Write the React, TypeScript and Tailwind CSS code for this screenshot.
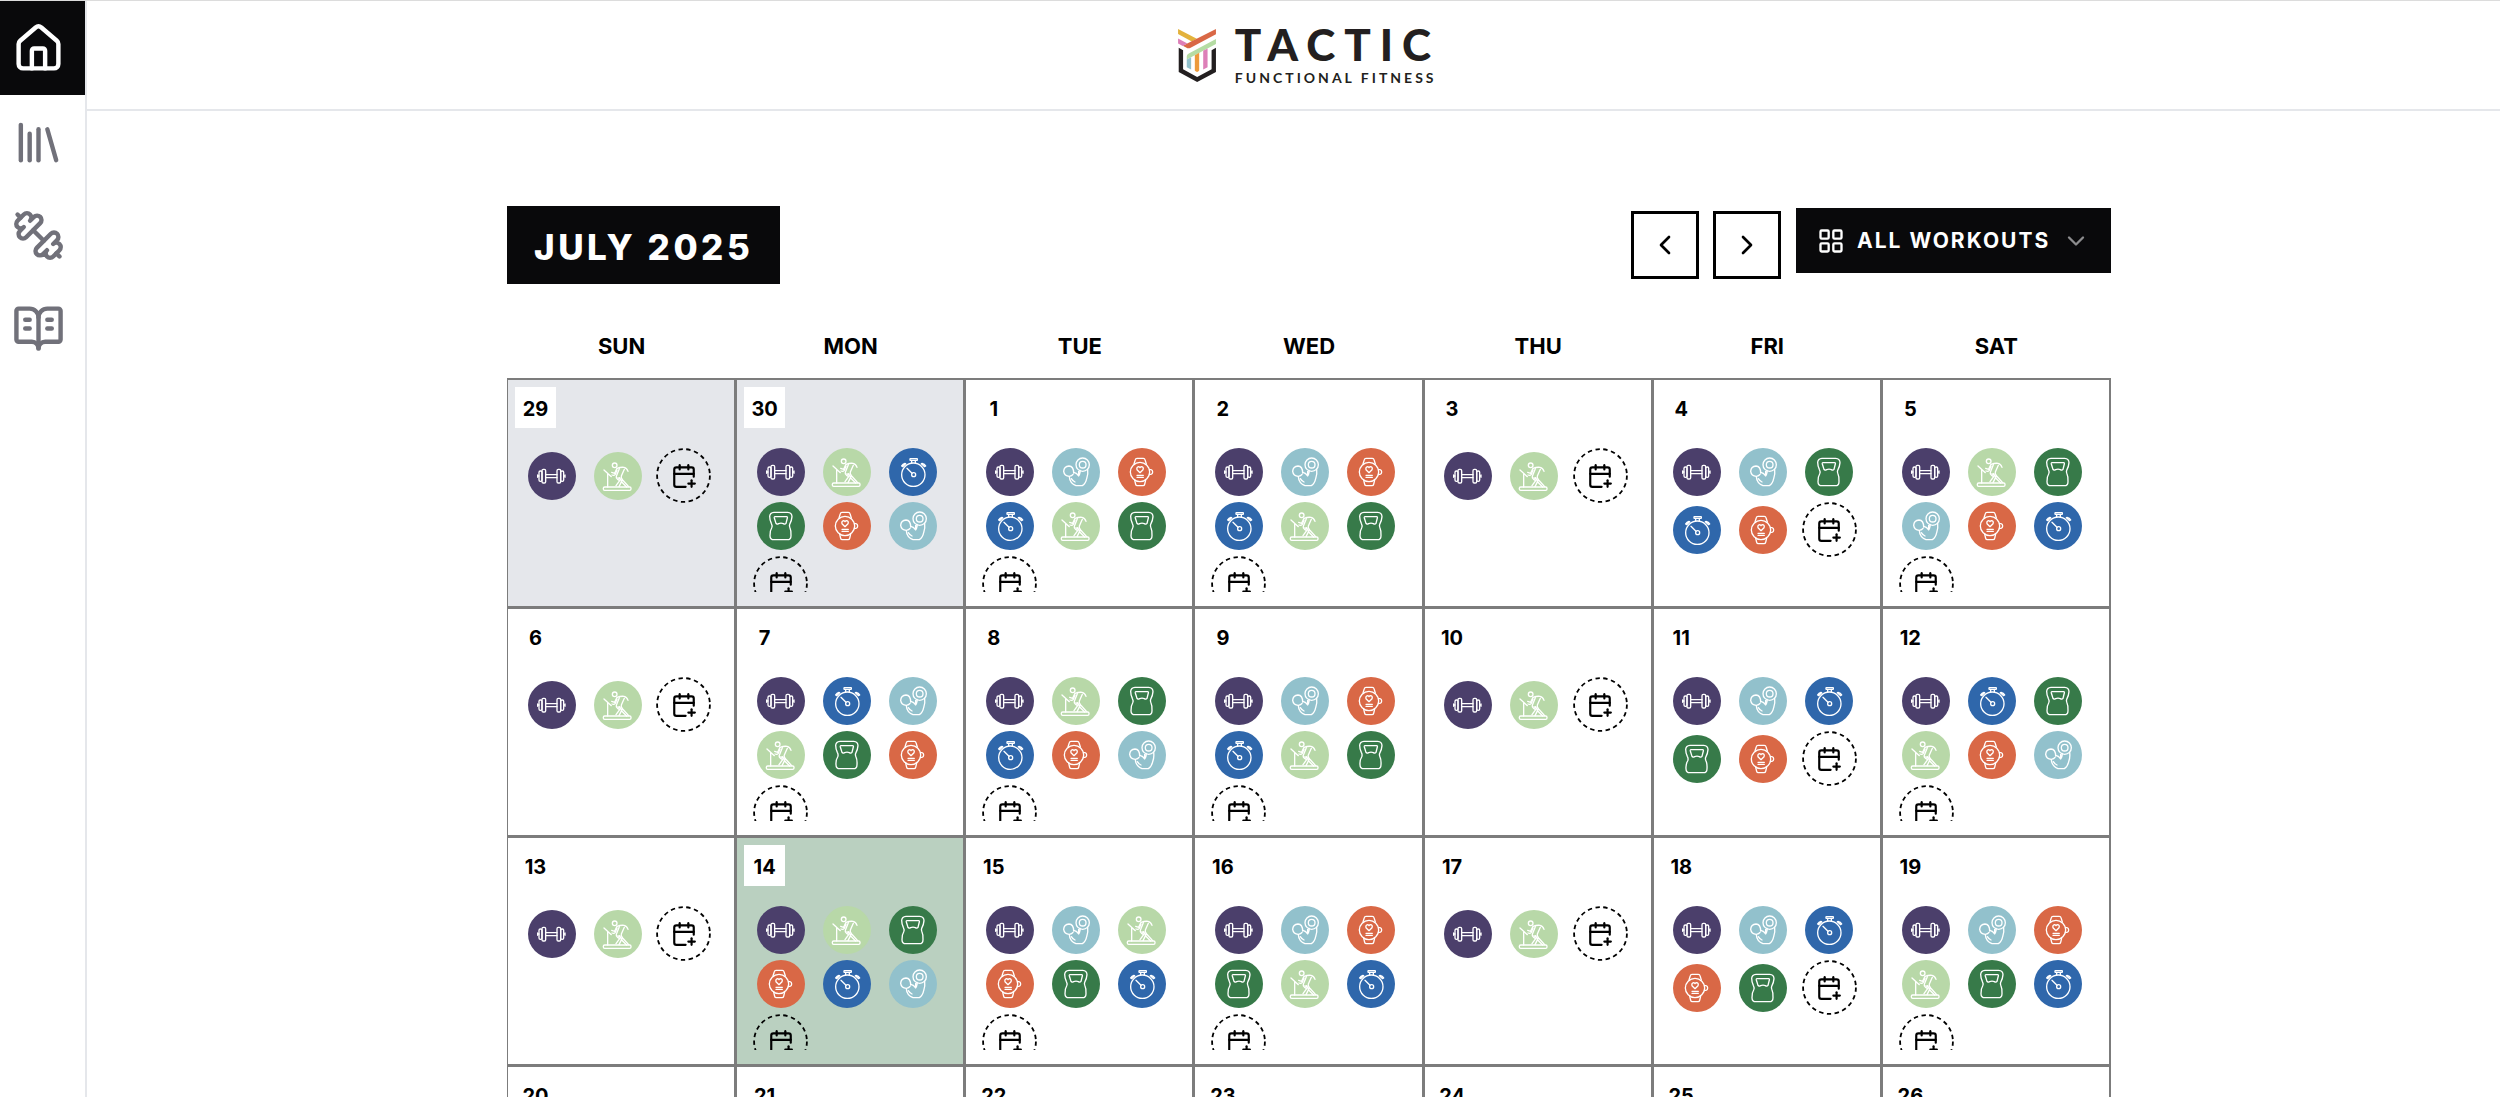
import type { ReactNode } from "react";
import {
  BookOpenText,
  CalendarPlus,
  ChevronDown,
  ChevronLeft,
  ChevronRight,
  House,
  LayoutGrid,
  Library,
} from "lucide-react";

type Kind = "strength" | "cardio" | "timer" | "kettlebell" | "watch" | "flex";

const WORKOUTS: Record<Kind, { label: string; color: string; art: ReactNode }> = {
  strength: {
    label: "Strength",
    color: "bg-[#4b3f6b]",
    art: (
      <>
        <rect x="42" y="52" width="11" height="41" rx="4" />
        <rect x="33" y="57" width="9" height="31" rx="4" />
        <rect x="87" y="52" width="11" height="41" rx="4" />
        <rect x="98" y="57" width="9" height="31" rx="4" />
        <path d="M53 68H87M53 77H87M29 69V76M111 69V76M29 72H33M107 72H111" />
      </>
    ),
  },
  cardio: {
    label: "Cardio",
    color: "bg-[#b8d8a8]",
    art: (
      <>
        <circle cx="62" cy="40" r="7" />
        <rect x="28" y="105" width="83" height="10" rx="4" />
        <path d="M41 105V66M30 54L52 74" />
        <path d="M53 61L62 64L69 49Q80 45 90 46Q99 48 102 58" />
        <path d="M69 54L64 67Q60 72 54 69M76 50L67 73Q65 78 71 82L77 86L66 101" />
        <path d="M91 52L82 72Q80 77 86 84L104 104M77 77L83 90L98 105M72 77L84 86L75 104" />
      </>
    ),
  },
  timer: {
    label: "Timed",
    color: "bg-[#2f67ab]",
    art: (
      <>
        <circle cx="73" cy="80" r="35" />
        <circle cx="74" cy="80" r="6" />
        <path d="M54 61L69 76" />
        <rect x="63" y="32" width="22" height="5" rx="1" />
        <path d="M68 37V44M79 37V44M41 56L50 47M38 54L42 49L48 46M107 56L97 47M110 54L106 49L99 46" />
      </>
    ),
  },
  kettlebell: {
    label: "Kettlebell",
    color: "bg-[#377a49]",
    art: (
      <>
        <path d="M51 31H92Q105 32 105 44Q104 57 98 67Q96 71 99 78Q103 86 102 101Q102 113 91 113H51Q39 113 39 101Q38 87 44 78Q47 71 43 64Q38 54 38 43Q39 32 51 31Z" />
        <path d="M54 44H89Q92 44 91 48L87 64Q84 68 79 65Q72 62 65 65Q59 68 57 64L52 48Q51 44 54 44Z" />
      </>
    ),
  },
  watch: {
    label: "Conditioning",
    color: "bg-[#d96846]",
    art: (
      <>
        <circle cx="66" cy="72" r="29" />
        <path d="M48 48L52 35Q53 31 57 31H76Q80 31 81 35L85 48M50 96L53 109Q54 113 58 113H75Q79 113 80 109L83 96" />
        <path d="M94 65H99Q104 66 104 72Q104 78 99 79H94" />
        <path d="M66 74L57 65Q55 57 62 56Q65 57 66 59Q68 56 71 56Q78 58 75 65Z" />
        <path d="M57 82H76M57 88H76" />
      </>
    ),
  },
  flex: {
    label: "Hypertrophy",
    color: "bg-[#92c1cc]",
    art: (
      <>
        <circle cx="92" cy="50" r="20" />
        <circle cx="92" cy="50" r="10" />
        <path d="M65 75Q65 55 51 54Q36 55 35 70Q37 84 52 85Q60 84 63 79" />
        <path d="M66 73Q75 75 80 84V70M82 81Q86 72 84 67M107 64Q109 80 104 92Q101 107 91 113H72Q53 105 52 86" />
        <path d="M58 92Q62 99 69 102" />
      </>
    ),
  },
};

const S = "strength";
const C = "cardio";
const T = "timer";
const K = "kettlebell";
const W = "watch";
const F = "flex";

type Day = { date: number; kinds: Kind[]; outside?: boolean; today?: boolean; bare?: boolean };

const WEEKS: Day[][] = [
  [
    { date: 29, kinds: [S, C], outside: true },
    { date: 30, kinds: [S, C, T, K, W, F], outside: true },
    { date: 1, kinds: [S, F, W, T, C, K] },
    { date: 2, kinds: [S, F, W, T, C, K] },
    { date: 3, kinds: [S, C] },
    { date: 4, kinds: [S, F, K, T, W] },
    { date: 5, kinds: [S, C, K, F, W, T] },
  ],
  [
    { date: 6, kinds: [S, C] },
    { date: 7, kinds: [S, T, F, C, K, W] },
    { date: 8, kinds: [S, C, K, T, W, F] },
    { date: 9, kinds: [S, F, W, T, C, K] },
    { date: 10, kinds: [S, C] },
    { date: 11, kinds: [S, F, T, K, W] },
    { date: 12, kinds: [S, T, K, C, W, F] },
  ],
  [
    { date: 13, kinds: [S, C] },
    { date: 14, kinds: [S, C, K, W, T, F], today: true },
    { date: 15, kinds: [S, F, C, W, K, T] },
    { date: 16, kinds: [S, F, W, K, C, T] },
    { date: 17, kinds: [S, C] },
    { date: 18, kinds: [S, F, T, W, K] },
    { date: 19, kinds: [S, F, W, C, K, T] },
  ],
  [20, 21, 22, 23, 24, 25, 26].map((date) => ({ date, kinds: [], bare: true })),
];

function Dumbbell() {
  return (
    <svg
      viewBox="0 0 24 24"
      className="size-[53px]"
      fill="none"
      stroke="currentColor"
      strokeWidth="2"
      strokeLinecap="round"
      strokeLinejoin="round"
      aria-hidden="true"
    >
      <path d="M14.4 14.4 9.6 9.6" />
      <path d="M18.657 21.485a2 2 0 1 1-2.829-2.828l-1.767 1.768a2 2 0 1 1-2.829-2.829l6.364-6.364a2 2 0 1 1 2.829 2.829l-1.768 1.767a2 2 0 1 1 2.828 2.829z" />
      <path d="m21.5 21.5-1.4-1.4" />
      <path d="M3.9 3.9 2.5 2.5" />
      <path d="M6.404 12.768a2 2 0 1 1-2.829-2.829l1.768-1.767a2 2 0 1 1-2.828-2.829l2.828-2.828a2 2 0 1 1 2.829 2.828l1.767-1.768a2 2 0 1 1 2.829 2.829z" />
    </svg>
  );
}

function Sidebar() {
  const links = [
    { name: "Library", icon: <Library className="size-[53px]" /> },
    { name: "Workouts", icon: <Dumbbell /> },
    { name: "Guides", icon: <BookOpenText className="size-[53px]" /> },
  ];
  return (
    <nav className="w-[87px] shrink-0 border-r-2 border-gray-200 text-[#71717a]">
      <a href="#home" aria-label="Home" className="mb-px flex h-[94px] items-center bg-[#09090b] pl-3 text-white">
        <House className="size-[53px]" />
      </a>
      {links.map((link) => (
        <a key={link.name} href="#" aria-label={link.name} className="flex h-[93px] items-center pl-3">
          {link.icon}
        </a>
      ))}
    </nav>
  );
}

function Logo() {
  return (
    <a href="#home" className="flex items-start gap-[19px] text-[#231f20]">
      <svg viewBox="60 88 113 158" className="mt-[7px] h-[53px] w-[38px]" aria-hidden="true">
        <path fill="#e3b23c" d="M60 88L116 117L101 125L60 103Z" />
        <path fill="#d96846" d="M173 88V104L96 145Q90 147 84 143L74 138Z" />
        <path fill="#dd7fb8" d="M60 116L88 131L74 139L60 131Z" />
        <path fill="#b5dca3" d="M173 118V133L86 179V169Q86 164 92 161Z" />
        <path fill="#92c1cc" d="M86 179L99 172V209L86 202Z" />
        <path fill="#ec9a3c" d="M110 166L123 159V212Q117 220 110 212Z" />
        <path fill="#dd7fb8" d="M135 153L148 146V202L135 209Z" />
        <path fill="#231f20" d="M62 144L75 151V208L117 231L160 208V151L173 144V216L117 246L62 216Z" />
      </svg>
      <span className="flex flex-col">
        <span className="text-[44px] leading-[44px] font-black tracking-[9px]">TACTIC</span>
        <span className="mt-1 text-[14px] leading-4 font-bold tracking-[3px]">FUNCTIONAL FITNESS</span>
      </span>
    </a>
  );
}

function WorkoutBadge({ kind }: { kind: Kind }) {
  const { label, color, art } = WORKOUTS[kind];
  return (
    <button type="button" aria-label={label} className={`size-12 rounded-full ${color}`}>
      <svg
        viewBox="0 0 144 144"
        className="size-12"
        fill="none"
        stroke="#fff"
        strokeWidth="4"
        strokeLinecap="round"
        strokeLinejoin="round"
        aria-hidden="true"
      >
        {art}
      </svg>
    </button>
  );
}

function AddWorkout() {
  return (
    <button type="button" aria-label="Add workout" className="relative flex size-[55px] items-center justify-center">
      <svg viewBox="0 0 55 55" className="absolute inset-0" fill="none" aria-hidden="true">
        <circle cx="27.5" cy="27.5" r="26.4" stroke="#000" strokeWidth="1.8" strokeDasharray="4.4 3.5" />
      </svg>
      <CalendarPlus className="size-[26px]" />
    </button>
  );
}

function DayCell({ day }: { day: Day }) {
  const tone = day.today ? "bg-[#bad0c0]" : day.outside ? "bg-gray-200" : "bg-white";
  return (
    <td className={`border-t border-r-2 border-b-2 border-l border-[#7c7c7c] p-0 ${tone}`}>
      <div className="flex h-[226px] flex-col px-[7px] pt-[7px] pb-[14px]">
        <span className="flex size-[41px] shrink-0 items-center justify-center bg-white pt-0.5 text-xl font-bold">
          {day.date}
        </span>
        <div className="mt-5 min-h-0 overflow-hidden pl-[9px]">
          <div className="grid grid-cols-[repeat(3,55px)] place-items-center gap-x-[11px] gap-y-1.5">
            {day.kinds.map((kind) => (
              <WorkoutBadge key={kind} kind={kind} />
            ))}
            {!day.bare && <AddWorkout />}
          </div>
        </div>
      </div>
    </td>
  );
}

function Calendar() {
  return (
    <table className="mt-[46px] w-full table-fixed border-separate border-spacing-0">
      <thead>
        <tr>
          {["SUN", "MON", "TUE", "WED", "THU", "FRI", "SAT"].map((name) => (
            <th key={name} scope="col" className="border-b border-[#7c7c7c] px-0 pt-0 pb-4 text-[22px] leading-8 font-bold">
              {name}
            </th>
          ))}
        </tr>
      </thead>
      <tbody>
        {WEEKS.map((week) => (
          <tr key={week[0].date}>
            {week.map((day) => (
              <DayCell key={day.date} day={day} />
            ))}
          </tr>
        ))}
      </tbody>
    </table>
  );
}

export default function App() {
  return (
    <div className="flex h-screen overflow-hidden border-t border-[#dcdcdc] bg-white font-['Inter',sans-serif] text-black">
      <Sidebar />
      <div className="min-w-0 flex-1">
        <header className="flex h-[110px] items-start justify-center border-b-2 border-gray-200 pt-[21px] pl-[31px] font-['Lato',sans-serif]">
          <Logo />
        </header>
        <main className="pt-[95px] pl-[31px]">
          <div className="mx-auto max-w-[1604px]">
            <div className="flex items-start justify-between">
              <h1 className="bg-[#09090b] px-[27px] pt-1 text-[35px] leading-[74px] font-extrabold tracking-widest text-white">
                JULY 2025
              </h1>
              <div className="flex items-start">
                <div className="mt-[5px] mr-[15px] flex gap-3.5">
                  <button type="button" aria-label="Previous month" className="flex size-[68px] items-center justify-center border-[3px] border-black">
                    <ChevronLeft className="size-8" />
                  </button>
                  <button type="button" aria-label="Next month" className="flex size-[68px] items-center justify-center border-[3px] border-black">
                    <ChevronRight className="size-8" />
                  </button>
                </div>
                <div className="relative mt-0.5 flex h-[65px] items-center bg-[#09090b] text-white">
                  <LayoutGrid className="pointer-events-none absolute left-[21px] size-7" />
                  <select
                    aria-label="Workout filter"
                    className="h-full appearance-none bg-transparent pr-[60px] pl-[61px] text-[21px] font-bold tracking-[2px]"
                  >
                    <option>ALL WORKOUTS</option>
                    <option>STRENGTH</option>
                    <option>CARDIO</option>
                  </select>
                  <ChevronDown className="pointer-events-none absolute right-[21px] size-7 text-[#8c8c8e]" strokeWidth={2} />
                </div>
              </div>
            </div>
            <Calendar />
          </div>
        </main>
      </div>
    </div>
  );
}
